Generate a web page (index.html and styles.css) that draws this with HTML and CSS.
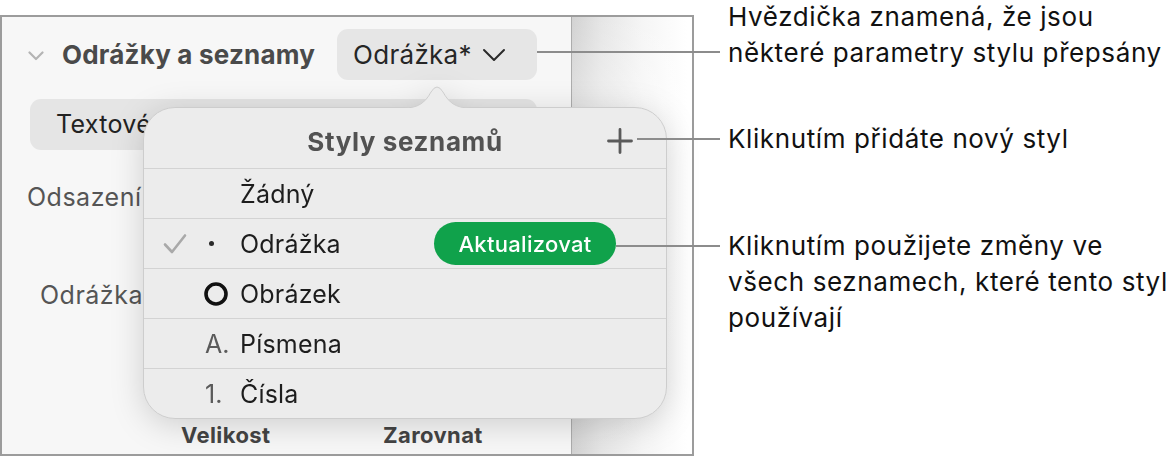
FILE: index.html
```html
<!DOCTYPE html>
<html lang="cs">
<head>
    <meta charset="UTF-8">
    <meta name="viewport" content="width=device-width, initial-scale=1.0">
    <title>Styly seznamů</title>
    <link rel="stylesheet" href="styles.css">
</head>
<body>
    <div class="figure">
        <div class="window">
            <aside class="sidebar">
                <div class="section-head">
                    <svg class="disclosure" width="16" height="10" viewBox="0 0 16 10"><polyline points="1.5,1.5 8,8 14.5,1.5"/></svg>
                    <span class="section-title">Odrážky a seznamy</span>
                    <button class="style-pop">Odrážka*
                        <svg width="24" height="14" viewBox="0 0 24 14"><polyline points="2,2 12,12 22,2"/></svg>
                    </button>
                </div>
                <div class="field">Textové odrážky</div>
                <div class="prop">Odsazení</div>
                <div class="prop prop-bullet">Odrážka</div>
                <div class="sub-labels">
                    <span>Velikost</span>
                    <span>Zarovnat</span>
                </div>
            </aside>
            <div class="backdrop"></div>

            <!-- list styles popover, opened from the style button -->
            <div class="popover">
                <svg class="popover-arrow" width="66" height="24" viewBox="0 0 66 24">
                    <path class="arrow-fill" d="M0 24 C14 24 21 19 27 8 Q33 -2 39 8 C45 19 52 24 66 24 Z"/>
                    <path class="arrow-edge" d="M0 24 C14 24 21 19 27 8 Q33 -2 39 8 C45 19 52 24 66 24"/>
                </svg>
                <div class="popover-body">
                    <div class="popover-head">
                        <span class="popover-title">Styly seznamů</span>
                        <svg class="add" width="26" height="26" viewBox="0 0 26 26"><path d="M13 1.5V24.5M1.5 13H24.5"/></svg>
                    </div>
                    <div class="list-row">
                        <span class="check"></span>
                        <span class="marker"></span>
                        <span class="label">Žádný</span>
                    </div>
                    <div class="list-row">
                        <span class="check"><svg width="24" height="22" viewBox="0 0 24 22"><polyline points="2,11.5 9,19 22,2.5"/></svg></span>
                        <span class="marker"><span class="dot"></span></span>
                        <span class="label">Odrážka</span>
                        <button class="update">Aktualizovat</button>
                    </div>
                    <div class="list-row">
                        <span class="check"></span>
                        <span class="marker marker-img"><svg width="26" height="26" viewBox="0 0 26 26"><circle cx="13" cy="13" r="10"/></svg></span>
                        <span class="label">Obrázek</span>
                    </div>
                    <div class="list-row">
                        <span class="check"></span>
                        <span class="marker marker-text">A.</span>
                        <span class="label">Písmena</span>
                    </div>
                    <div class="list-row">
                        <span class="check"></span>
                        <span class="marker marker-text">1.</span>
                        <span class="label">Čísla</span>
                    </div>
                </div>
            </div>
        </div>

        <div class="notes">
            <p class="note note-style"><span class="leader"></span>Hvězdička znamená, že jsou<br>některé parametry stylu přepsány</p>
            <p class="note note-add"><span class="leader"></span>Kliknutím přidáte nový styl</p>
            <p class="note note-update"><span class="leader"></span>Kliknutím použijete změny ve<br>všech seznamech, které tento styl<br>používají</p>
        </div>
    </div>
</body>
</html>
```

FILE: styles.css
```css
*{
    box-sizing: border-box;
}
body{
    margin: 0;
    width: 1176px;
    height: 458px;
    overflow: hidden;
    background-color: #fff;
    font-family: Inter, "Noto Sans", "Liberation Sans", sans-serif;
    color: #1d1d1d;
}
.figure{
    display: flex;
    align-items: flex-start;
}
.window{
    position: relative;
    display: flex;
    width: 694px;
    height: 441px;
    margin-top: 15px;
    border: 2px solid #9c9c9c;
}

/* sidebar */
.sidebar{
    display: flex;
    flex-direction: column;
    width: 570px;
    padding-right: 34px;
    background-color: #f7f7f7;
    border-right: 1px solid #adadad;
}
.section-head{
    display: flex;
    align-items: center;
    height: 51px;
    margin-top: 12px;
    padding-left: 26px;
}
.disclosure{
    margin-right: 18px;
    margin-top: 2px;
}
.disclosure polyline{
    fill: none;
    stroke: #b4b4b4;
    stroke-width: 2.2;
    stroke-linecap: round;
    stroke-linejoin: round;
}
.section-title{
    font-size: 26px;
    font-weight: 700;
    color: #4a4a4a;
    letter-spacing: 0.2px;
}
.style-pop{
    display: flex;
    align-items: center;
    gap: 10px;
    width: 200px;
    height: 51px;
    margin-left: auto;
    padding: 0 0 0 16px;
    border: none;
    border-radius: 11px;
    background-color: #e6e6e6;
    font-family: inherit;
    font-size: 26px;
    letter-spacing: 0.3px;
    color: #262626;
}
.style-pop polyline{
    fill: none;
    stroke: #2a2a2a;
    stroke-width: 2;
    stroke-linecap: round;
    stroke-linejoin: round;
}
.field{
    height: 51px;
    margin: 19px 0 0 28px;
    padding-left: 26px;
    border-radius: 11px;
    background-color: #e5e5e5;
    font-size: 25px;
    letter-spacing: 0.3px;
    line-height: 51px;
    color: #222;
    white-space: nowrap;
    overflow: hidden;
}
.prop{
    margin-top: 32px;
    padding-left: 25px;
    font-size: 25px;
    letter-spacing: 0.5px;
    line-height: 30px;
    color: #555;
    white-space: nowrap;
}
.prop-bullet{
    margin-top: 68px;
    padding-left: 38px;
}
.sub-labels{
    display: grid;
    grid-template-columns: 202px 202px;
    margin-top: auto;
    margin-bottom: 7px;
    padding-left: 179px;
    font-size: 22px;
    font-weight: 700;
    letter-spacing: 0.4px;
    line-height: 24px;
    color: #444;
}

/* area right of the sidebar, shaded by the window edge */
.backdrop{
    flex: 1;
    background:
        linear-gradient(to bottom, rgba(255,255,255,0) 0, rgba(255,255,255,0.45) 120px, rgba(255,255,255,0) 440px),
        linear-gradient(to right, #d2d2d2 0, #e6e6e6 30px, #f5f5f5 70px, #fff 115px);
}

/* popover */
.popover{
    position: absolute;
    left: 141px;
    top: 90px;
    width: 524px;
    filter: drop-shadow(0 6px 16px rgba(0,0,0,0.16));
}
.popover-arrow{
    position: absolute;
    left: 261px;
    top: -23px;
    z-index: 1;
}
.arrow-fill{
    fill: #ececec;
}
.arrow-edge{
    fill: none;
    stroke: #cdcdcd;
    stroke-width: 1;
}
.popover-body{
    position: relative;
    background-color: #ececec;
    border: 1px solid #cdcdcd;
    border-radius: 32px;
    overflow: hidden;
}
.popover-head{
    position: relative;
    display: flex;
    align-items: center;
    justify-content: center;
    height: 60px;
    padding-top: 6px;
}
.popover-title{
    font-size: 26px;
    font-weight: 700;
    letter-spacing: 0.6px;
    color: #525252;
}
.add{
    position: absolute;
    right: 33px;
    top: 20px;
}
.add path{
    stroke: #5a5a5a;
    stroke-width: 2.8;
    stroke-linecap: round;
}
.list-row{
    display: flex;
    align-items: center;
    height: 50px;
    padding-left: 19px;
    border-top: 1px solid #d3d3d3;
    font-size: 25px;
    color: #1d1d1d;
}
.check{
    display: flex;
    align-items: center;
    width: 42px;
}
.check polyline{
    fill: none;
    stroke: #a9a9a9;
    stroke-width: 2.6;
    stroke-linecap: round;
    stroke-linejoin: round;
}
.marker{
    display: flex;
    align-items: center;
    width: 35px;
}
.dot{
    width: 5px;
    height: 5px;
    margin-left: 4px;
    border-radius: 50%;
    background-color: #2a2a2a;
}
.marker-img{
    margin-left: -2px;
    width: 37px;
}
.marker-img circle{
    fill: none;
    stroke: #111;
    stroke-width: 3.6;
}
.marker-text{
    color: #5a5a5a;
}
.label{
    letter-spacing: 0.2px;
}
.update{
    width: 182px;
    height: 43px;
    margin-left: auto;
    margin-right: 50px;
    border: none;
    border-radius: 22px;
    background-color: #10a24b;
    font-family: inherit;
    font-size: 22px;
    font-weight: 500;
    letter-spacing: 0.3px;
    color: #fff;
}

/* callout texts */
.notes{
    margin-left: 34px;
}
.note{
    position: relative;
    margin: 0;
    font-size: 26px;
    letter-spacing: 0.6px;
    line-height: 36px;
    color: #111;
    white-space: nowrap;
}
.leader{
    position: absolute;
    right: 100%;
    margin-right: 8px;
    height: 2px;
    background-color: #8c8c8c;
}
.note-style{
    margin-top: -1px;
}
.note-style .leader{
    top: 52px;
    width: 183px;
}
.note-add{
    margin-top: 50px;
}
.note-add .leader{
    top: 17px;
    width: 83px;
}
.note-update{
    margin-top: 71px;
}
.note-update .leader{
    top: 17px;
    width: 104px;
}
```
